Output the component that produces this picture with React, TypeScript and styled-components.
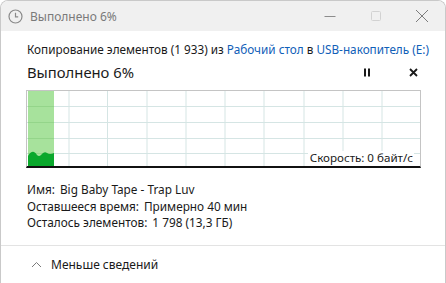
import React from 'react';
import styled, { createGlobalStyle } from 'styled-components';

const GlobalStyle = createGlobalStyle`
  html, body {
    margin: 0;
    padding: 0;
    background: #ffffff;
  }
  * {
    box-sizing: border-box;
  }
`;

const Window = styled.div`
  width: 446px;
  height: 283px;
  display: flex;
  flex-direction: column;
  background: #ffffff;
  border: 1px solid #c9c9c9;
  border-bottom: none;
  border-radius: 8px 8px 0 0;
  overflow: hidden;
  font-family: 'Noto Sans', 'Open Sans', sans-serif;
  color: #1a1a1a;
`;

const TitleBar = styled.div`
  height: 30px;
  flex-shrink: 0;
  display: flex;
  align-items: center;
  background: #f0f0f0;
  padding-left: 7px;
`;

const TitleText = styled.span`
  margin-left: 7px;
  font-size: 12px;
  color: #7a7a7a;
`;

const TitleControls = styled.div`
  margin-left: auto;
  display: flex;
  height: 100%;
`;

const TitleButton = styled.div`
  width: 46px;
  height: 100%;
  display: flex;
  align-items: center;
  justify-content: center;
`;

const Content = styled.div`
  padding: 10px 26px 0 25px;
  display: flex;
  flex-direction: column;
`;

const Summary = styled.div`
  font-size: 11.75px;
  line-height: 16px;
  padding-left: 1px;
  white-space: nowrap;
`;

const LinkText = styled.span`
  color: #1160b8;
`;

const HeadingRow = styled.div`
  display: flex;
  align-items: center;
  margin-top: 4px;
  height: 22px;
  padding-left: 1px;
`;

const Heading = styled.div`
  font-size: 14.8px;
  flex: 1;
`;

const Action = styled.div<{ $gap?: number }>`
  width: 12px;
  height: 12px;
  display: flex;
  align-items: center;
  justify-content: center;
  margin-left: ${(p) => p.$gap ?? 0}px;
`;

const Chart = styled.div`
  position: relative;
  margin-top: 7px;
  width: 395px;
  height: 78px;
  border: 1px solid #c4c4c4;
  border-bottom: 2px solid #111111;
`;

const Speed = styled.div`
  position: absolute;
  right: 6px;
  bottom: 0;
  padding: 0 1px 1px 2px;
  background: #ffffff;
  font-size: 11.6px;
  line-height: 14px;
`;

const Details = styled.div`
  margin-top: 13px;
  padding-left: 1px;
  display: flex;
  flex-direction: column;
  font-size: 11.8px;
  line-height: 16.5px;
`;

const DetailLabel = styled.span`
  margin-right: 5px;
`;

const Divider = styled.div`
  margin-top: 14px;
  height: 1px;
  background: #e3e3e3;
`;

const Footer = styled.div`
  display: flex;
  align-items: center;
  height: 42px;
  padding-left: 30px;
  font-size: 12px;
  gap: 9px;
`;

const gridX = [42, 80.5, 120, 159, 198, 237, 277, 316, 355];
const gridY = [15.5, 31.5, 47.5, 62.5];

const ProgressChart: React.FC = () => (
  <Chart>
    <svg width="393" height="75" style={{ display: 'block' }}>
      {gridX.map((x) => (
        <line key={x} x1={x} y1={0} x2={x} y2={75} stroke="#d5e5e4" strokeWidth={1} />
      ))}
      {gridY.map((y) => (
        <line key={y} x1={0} y1={y} x2={393} y2={y} stroke="#d5e5e4" strokeWidth={1} />
      ))}
      <rect x={1} y={0} width={26} height={75} fill="#a7e29c" />
      {gridY.map((y) => (
        <line key={'g' + y} x1={1} y1={y} x2={27} y2={y} stroke="#94d58a" strokeWidth={1} />
      ))}
      <path
        d="M1 75 L1 65 Q4 60 7 61 Q9 62 10 64 Q12 66 14 64 Q17 60 20 62 Q23 64 27 62 L27 75 Z"
        fill="#0aa82c"
      />
    </svg>
    <Speed>Скорость: 0 байт/с</Speed>
  </Chart>
);

const App: React.FC = () => (
  <>
    <GlobalStyle />
    <Window>
      <TitleBar>
        <svg width="15" height="15" viewBox="0 0 15 15">
          <circle cx="7.5" cy="7.5" r="6.5" fill="none" stroke="#8a8a8a" strokeWidth="1.2" />
          <path d="M7.5 3.8 V7.8 H10.2" fill="none" stroke="#8a8a8a" strokeWidth="1.2" />
        </svg>
        <TitleText>Выполнено 6%</TitleText>
        <TitleControls>
          <TitleButton>
            <svg width="12" height="12" viewBox="0 0 12 12">
              <line x1="0.5" y1="6.5" x2="11.5" y2="6.5" stroke="#8c8c8c" strokeWidth="1" />
            </svg>
          </TitleButton>
          <TitleButton>
            <svg width="12" height="12" viewBox="0 0 12 12">
              <rect x="1.5" y="1.5" width="9" height="9" rx="1" fill="none" stroke="#d2d2d2" strokeWidth="1" />
            </svg>
          </TitleButton>
          <TitleButton>
            <svg width="14" height="14" viewBox="0 0 14 14">
              <path d="M1 1 L13 13 M13 1 L1 13" stroke="#7c7c7c" strokeWidth="1" />
            </svg>
          </TitleButton>
        </TitleControls>
      </TitleBar>
      <Content>
        <Summary>
          Копирование элементов (1 933) из <LinkText>Рабочий стол</LinkText> в{' '}
          <LinkText>USB-накопитель (E:)</LinkText>
        </Summary>
        <HeadingRow>
          <Heading>Выполнено 6%</Heading>
          <Action>
            <svg width="8" height="9" viewBox="0 0 8 9">
              <rect x="1" y="0.5" width="2" height="8" fill="#1a1a1a" />
              <rect x="5" y="0.5" width="2" height="8" fill="#1a1a1a" />
            </svg>
          </Action>
          <Action $gap={34}>
            <svg width="9" height="9" viewBox="0 0 9 9">
              <path d="M1 1 L8 8 M8 1 L1 8" stroke="#1a1a1a" strokeWidth="1.8" />
            </svg>
          </Action>
        </HeadingRow>
        <ProgressChart />
        <Details>
          <div>
            <DetailLabel>Имя:</DetailLabel>Big Baby Tape - Trap Luv
          </div>
          <div>
            <DetailLabel>Оставшееся время:</DetailLabel>Примерно 40 мин
          </div>
          <div>
            <DetailLabel>Осталось элементов:</DetailLabel>1 798 (13,3 ГБ)
          </div>
        </Details>
      </Content>
      <Divider />
      <Footer>
        <svg width="11" height="7" viewBox="0 0 11 7">
          <path d="M1 6 L5.5 1.5 L10 6" fill="none" stroke="#7a7a7a" strokeWidth="1" />
        </svg>
        <span>Меньше сведений</span>
      </Footer>
    </Window>
  </>
);

export default App;
